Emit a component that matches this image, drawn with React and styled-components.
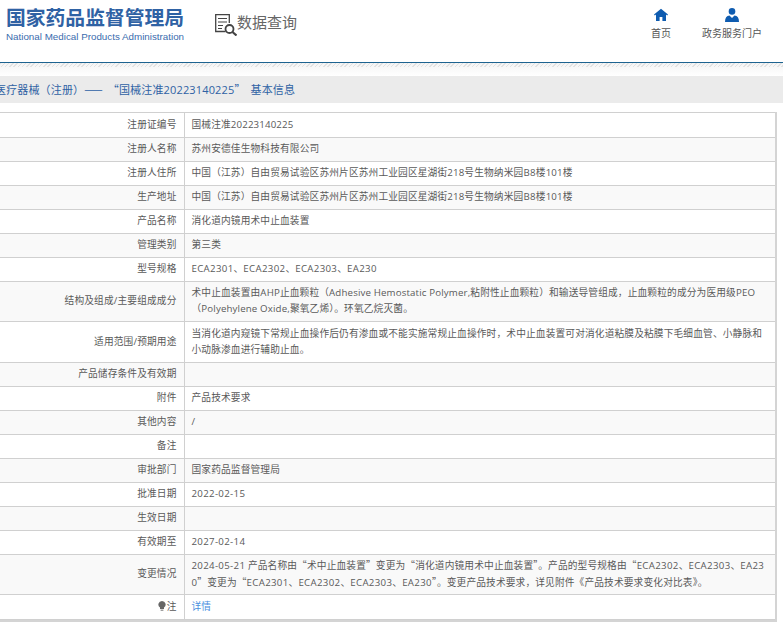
import React from 'react'
import styled, { createGlobalStyle } from 'styled-components'

const GlobalStyle = createGlobalStyle`
  html, body {
    margin: 0;
    padding: 0;
    background: #fff;
    overflow: hidden;
  }
  body {
    font-family: "Open Sans", "Noto Sans CJK SC", sans-serif;
    font-size: 9.7px;
    letter-spacing: 0.15px;
    color: #595959;
  }
`

const Page = styled.div`
  width: 783px;
  height: 624px;
  overflow: hidden;
`

const Header = styled.header`
  display: flex;
  height: 63px;
  box-sizing: border-box;
  padding: 6px 0 0 6px;
  border-bottom: 1px solid #1d6390;
`

const Logo = styled.div`
  width: 178px;
`

const LogoTitle = styled.div`
  font-family: "Noto Sans CJK SC", sans-serif;
  font-weight: 700;
  font-size: 19.8px;
  line-height: 22px;
  letter-spacing: 0;
  color: #2f62a4;
  white-space: nowrap;
`

const LogoSub = styled.div`
  margin-top: 3px;
  font-family: "Liberation Sans", sans-serif;
  font-size: 9.8px;
  line-height: 11px;
  letter-spacing: 0;
  color: #3a6cae;
  white-space: nowrap;
`

const Query = styled.div`
  display: flex;
  align-items: flex-start;
  margin: 6px 0 0 31px;
  font-family: "Noto Sans CJK SC", sans-serif;
  font-size: 15px;
  line-height: 20px;
  letter-spacing: 0;
  color: #666;
  svg {
    margin-top: 2px;
  }
`

const Nav = styled.nav`
  display: flex;
  margin-left: auto;
  padding: 2px 21px 0 0;
  gap: 31px;
`

const NavItem = styled.div`
  display: flex;
  flex-direction: column;
  align-items: center;
  font-family: "Noto Sans CJK SC", sans-serif;
  font-size: 10px;
  line-height: 14px;
  letter-spacing: 0;
  color: #555;
  svg {
    margin-bottom: 4px;
  }
`

const Stripe = styled.div`
  height: 13px;
  background:
    repeating-linear-gradient(135deg, #e2e2e2 0 1px, transparent 1px 3px) top / 100% 4px no-repeat,
    linear-gradient(#f4f4f4, #fff);
`

const TitleBar = styled.div`
  height: 27px;
  line-height: 27px;
  background: #ebebeb;
  color: #2f62a4;
  font-size: 11px;
  letter-spacing: 0.15px;
  word-spacing: 2px;
  white-space: nowrap;
  margin-bottom: 9px;
  overflow: hidden;
`

const TitleText = styled.span`
  display: block;
  margin-left: -5px;
`

const Punct = styled.span`
  font-family: "Noto Sans CJK SC", sans-serif;
`

const Code = styled.span`
  letter-spacing: 0.32px;
`

const TableWrap = styled.div`
  width: 777px;
  box-sizing: border-box;
  border-right: 2px solid #d4d4d4;
  border-bottom: 2px solid #d4d4d4;
`

const Table = styled.table`
  width: 775px;
  table-layout: fixed;
  border-collapse: collapse;
  border-top: 1px solid #d0d0d0;
`

const Row = styled.tr`
  height: ${p => p.$h || 24}px;
  background: ${p => (p.$even ? '#f9f9f9' : '#fff')};
  border-bottom: 1px solid #d0d0d0;
`

const Label = styled.td`
  width: 176px;
  box-sizing: border-box;
  padding: 0 7px 1px 0;
  text-align: right;
  border-right: 1px solid #d0d0d0;
  line-height: 16px;
`

const Value = styled.td`
  padding: 0 7px 1px 7px;
  line-height: 16px;
  word-break: break-all;
`

const Link = styled.a`
  color: #4a8fe0;
`

const Bulb = () => (
  <svg width="8" height="10" viewBox="0 0 8 10" style={{ marginRight: 1, verticalAlign: -1 }}>
    <path d="M4 0a3.600 3.600 0 0 1 2 6.600V8H2V6.600A3.600 3.600 0 0 1 4 0z" fill="#666" />
    <rect x="2.600" y="8.600" width="2.800" height="1.200" fill="#888" />
  </svg>
)

const HomeIcon = () => (
  <svg width="14" height="14" viewBox="0 0 14 14">
    <path d="M7 .8 0 6.400l.8 1L2 6.500V13h3.600V9h2.800v4H12V6.500l1.200.9.8-1z" fill="#0f5cb0" />
  </svg>
)

const UserIcon = () => (
  <svg width="14" height="14" viewBox="0 0 14 14">
    <circle cx="7" cy="3.400" r="3.300" fill="#0f5cb0" />
    <path d="M0 14c0-4 1.500-6 4.500-6.400L7 10l2.500-2.400C12.500 8 14 10 14 14z" fill="#0f5cb0" />
  </svg>
)

const QueryIcon = () => (
  <svg width="22" height="22" viewBox="0 0 22 22" fill="none" stroke="#444">
    <path d="M10.500 17.500H.7V.7h13.600V9" strokeWidth="1.300" />
    <path d="M3 4.500h9M3 8h9M3 11.500h5M3 14.500h4" strokeWidth="1.200" />
    <circle cx="14.500" cy="15" r="4" strokeWidth="1.800" />
    <path d="m17.500 18 4 3.500" strokeWidth="2.200" />
  </svg>
)

// curly quotes and dashes need the full-width CJK glyphs, model codes and dates run a bit wider
const withPunct = text =>
  text.split(/([“”—]+|[A-Z]+\d+|\d{4}-\d{2}-\d{2})/).map((part, i) => {
    if (i % 2 === 0) return part
    return /[“”—]/.test(part) ? <Punct key={i}>{part}</Punct> : <Code key={i}>{part}</Code>
  })

const rows = [
  { label: '注册证编号', value: '国械注准20223140225', h: 25 },
  { label: '注册人名称', value: '苏州安德佳生物科技有限公司' },
  { label: '注册人住所', value: '中国（江苏）自由贸易试验区苏州片区苏州工业园区星湖街218号生物纳米园B8楼101楼' },
  { label: '生产地址', value: '中国（江苏）自由贸易试验区苏州片区苏州工业园区星湖街218号生物纳米园B8楼101楼' },
  { label: '产品名称', value: '消化道内镜用术中止血装置' },
  { label: '管理类别', value: '第三类' },
  { label: '型号规格', value: 'ECA2301、ECA2302、ECA2303、EA230' },
  {
    label: '结构及组成/主要组成成分',
    value: '术中止血装置由AHP止血颗粒（Adhesive Hemostatic Polymer,粘附性止血颗粒）和输送导管组成，止血颗粒的成分为医用级PEO（Polyehylene Oxide,聚氧乙烯）。环氧乙烷灭菌。',
    h: 40,
  },
  {
    label: '适用范围/预期用途',
    value: '当消化道内窥镜下常规止血操作后仍有渗血或不能实施常规止血操作时，术中止血装置可对消化道粘膜及粘膜下毛细血管、小静脉和小动脉渗血进行辅助止血。',
    h: 41,
  },
  { label: '产品储存条件及有效期', value: '' },
  { label: '附件', value: '产品技术要求' },
  { label: '其他内容', value: '/' },
  { label: '备注', value: '' },
  { label: '审批部门', value: '国家药品监督管理局' },
  { label: '批准日期', value: '2022-02-15' },
  { label: '生效日期', value: '' },
  { label: '有效期至', value: '2027-02-14' },
  {
    label: '变更情况',
    value: '2024-05-21 产品名称由“术中止血装置”变更为“消化道内镜用术中止血装置”。产品的型号规格由“ECA2302、ECA2303、EA230”变更为“ECA2301、ECA2302、ECA2303、EA230”。变更产品技术要求，详见附件《产品技术要求变化对比表》。',
    h: 40,
  },
]

export default function App() {
  return (
    <Page>
      <GlobalStyle />
      <Header>
        <Logo>
          <LogoTitle>国家药品监督管理局</LogoTitle>
          <LogoSub>National Medical Products Administration</LogoSub>
        </Logo>
        <Query>
          <QueryIcon />
          数据查询
        </Query>
        <Nav>
          <NavItem>
            <HomeIcon />
            首页
          </NavItem>
          <NavItem>
            <UserIcon />
            政务服务门户
          </NavItem>
        </Nav>
      </Header>
      <Stripe />
      <TitleBar>
        <TitleText>{withPunct('医疗器械（注册）—— “国械注准20223140225” 基本信息')}</TitleText>
      </TitleBar>
      <TableWrap>
        <Table>
          <colgroup>
            <col style={{ width: 184 }} />
            <col />
          </colgroup>
          <tbody>
            {rows.map((r, i) => (
              <Row key={r.label} $h={r.h} $even={i % 2 === 1}>
                <Label>{r.label}</Label>
                <Value>{withPunct(r.value)}</Value>
              </Row>
            ))}
            <Row $h={25} $even={false}>
              <Label>
                <Bulb />注
              </Label>
              <Value>
                <Link>详情</Link>
              </Value>
            </Row>
          </tbody>
        </Table>
      </TableWrap>
    </Page>
  )
}
